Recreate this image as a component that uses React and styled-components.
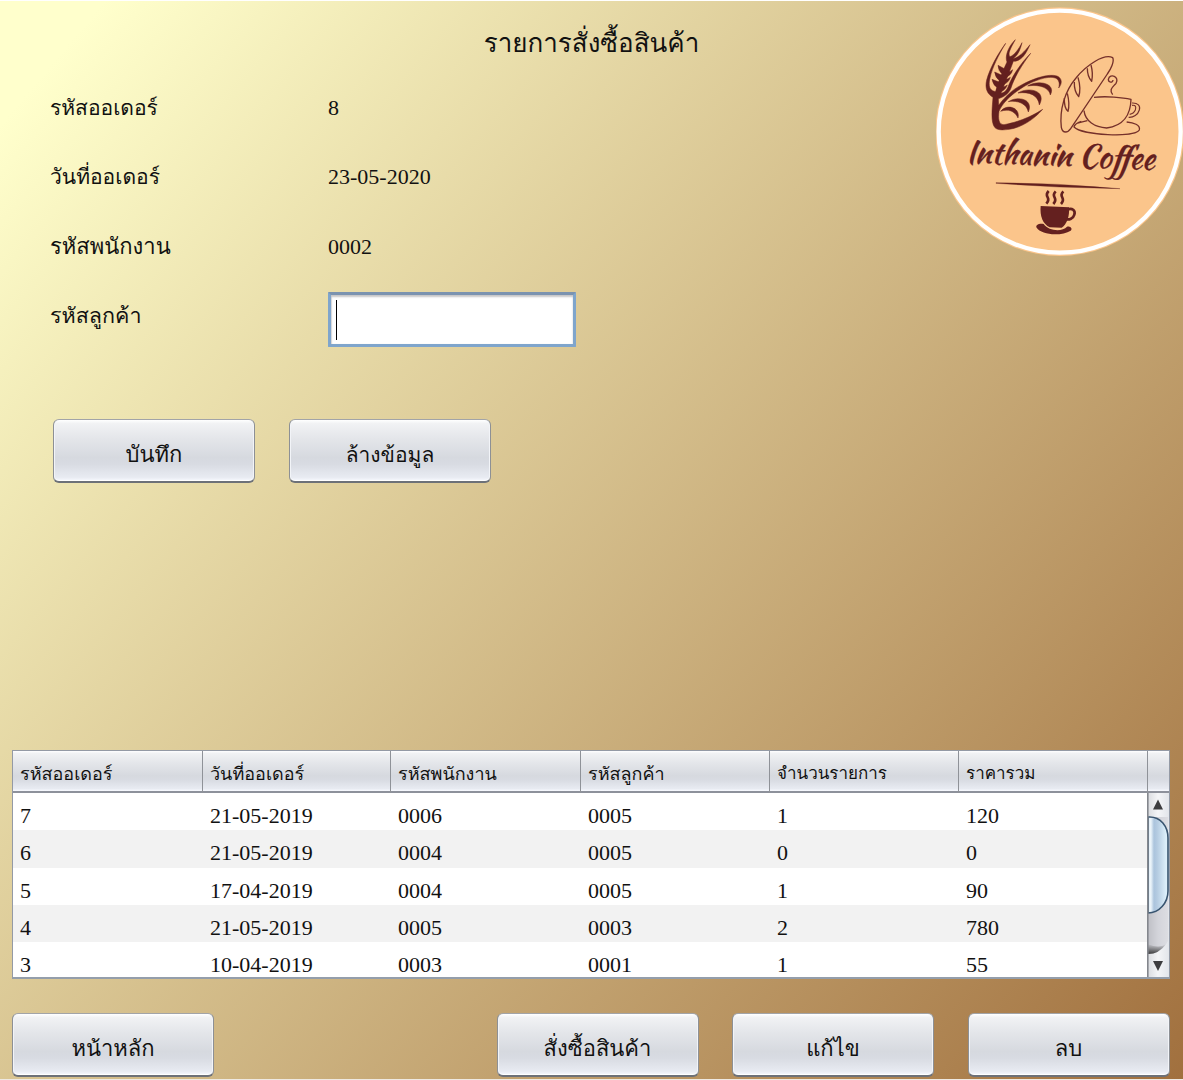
import React from 'react';
import styled, { createGlobalStyle } from 'styled-components';

const Global = createGlobalStyle`
  body { margin: 0; }
  * { box-sizing: border-box; }
`;

const steel = 'linear-gradient(180deg, #ffffff 0, #f1f2f4 6%, #e4e6ea 30%, #d6d9df 62%, #d8dbe2 72%, #e8ebf2 94%, #f8faff 100%)';

const Screen = styled.main`
  width: 1183px;
  height: 1080px;
  overflow: hidden;
  display: flex;
  flex-direction: column;
  border-top: 1px solid #fff;
  border-bottom: 1px solid #eee9e2;
  background: linear-gradient(130deg, #ffffcc 5%, #9f6d3b 102%);
  font-family: 'Liberation Serif', 'Loma', serif;
  font-size: 22px;
  color: #111;
`;

const Top = styled.header`
  display: grid;
  grid-template-columns: 936px 247px;
  height: 418px;
`;

const Title = styled.h1`
  margin: 0;
  padding: 23px 0 0 247px;
  height: 72px;
  font-weight: 400;
  font-size: 26px;
  line-height: 40px;
  text-align: center;
  white-space: nowrap;
`;

const Form = styled.dl`
  margin: 0;
  padding-left: 50px;
`;

const FormRow = styled.div`
  display: flex;
  height: 69.3px;
`;

const Label = styled.dt`
  width: 278px;
  font-size: ${(p) => p.$size || 21}px;
  line-height: 70px;
`;

const Value = styled.dd`
  margin: 0;
  line-height: 70px;
`;

const Field = styled.div`
  width: 248px;
  height: 55px;
  margin-top: 11px;
  padding: 5px 5px 5px;
  border: 3px solid #7fa5cc;
  border-top-color: #7b93b0;
  border-radius: 1px;
  background: #fff;
  box-shadow: inset 0 2px 2px #c6c6c8, inset 1px 0 1px #ddd;
`;

const Caret = styled.div`
  width: 1px;
  height: 40px;
  background: #000;
`;

const Logo = styled.svg`
  width: 247px;
  height: 250px;
  margin-top: 5px;
`;

const Button = styled.button`
  width: 202px;
  height: 64px;
  padding: 8px 0 0;
  border: 1px solid #8d9095;
  border-top-color: #a2a4a8;
  border-bottom: 2px solid #6d7178;
  border-radius: 6px;
  background: ${steel};
  box-shadow: inset 1px 0 #f2f4f8, inset -1px 0 #f2f4f8, inset 0 -1px #fff;
  font-family: inherit;
  font-size: ${(p) => p.$size || 22}px;
  color: #111;
`;

const FormActions = styled.div`
  display: flex;
  gap: 34px;
  padding-left: 53px;
  height: 331px;
`;

const Footer = styled.footer`
  display: flex;
  gap: 33.5px;
  padding: 34px 13.5px 0 12px;
  & > :first-child { margin-right: auto; }
`;

const TableBox = styled.section`
  width: 1158px;
  height: 229px;
  margin-left: 12px;
  flex: none;
  border: 1px solid #949aa5;
  border-bottom: 2px solid #949eab;
  background: #fff;
  overflow: hidden;
`;

const HeadRow = styled.div`
  display: grid;
  grid-template-columns: 190px 188px 190px 189px 189px 189px 1fr;
  height: 42px;
  border-bottom: 2px solid #8d919b;
  background: ${steel};
`;

const HeadCell = styled.div`
  padding-left: 7px;
  border-right: ${(p) => (p.$last ? 'none' : '1px solid #8f9298')};
  font-size: ${(p) => p.$size || 18}px;
  line-height: 46px;
  white-space: nowrap;
`;

const Body = styled.div`
  display: flex;
  height: 184px;
`;

const Rows = styled.div`
  flex: 1;
  overflow: hidden;
`;

const DataRow = styled.div`
  display: grid;
  grid-template-columns: 190px 188px 190px 189px 189px 189px;
  height: 37.3px;
  padding-top: 4px;
  background: ${(p) => (p.$striped ? '#f2f2f2' : '#fff')};
  line-height: 37px;
  & > span { padding-left: 7px; }
`;

const ScrollBar = styled.svg`
  width: 22px;
  height: 184px;
  flex: none;
`;

const columns = [
  { name: 'รหัสออเดอร์' },
  { name: 'วันที่ออเดอร์' },
  { name: 'รหัสพนักงาน' },
  { name: 'รหัสลูกค้า' },
  { name: 'จำนวนรายการ', size: 17 },
  { name: 'ราคารวม', size: 17 },
];
const orders = [
  ['7', '21-05-2019', '0006', '0005', '1', '120'],
  ['6', '21-05-2019', '0004', '0005', '0', '0'],
  ['5', '17-04-2019', '0004', '0005', '1', '90'],
  ['4', '21-05-2019', '0005', '0003', '2', '780'],
  ['3', '10-04-2019', '0003', '0001', '1', '55'],
];

const brown = '#64201f';

function CoffeeLogo() {
  return (
    <Logo viewBox="18 18 741 750">
      <circle cx="389" cy="395" r="373" fill="#fbc58b" />
      <circle cx="389" cy="395" r="363" fill="none" stroke="#fff" strokeWidth="13" />
      {/* wheat ear and striped loaf */}
      <g transform="translate(88 90)" fill={brown} stroke={brown} strokeWidth="1.5">
        <path d="M139 40C115 72 91 116 82 150C76 176 84 192 101 202C98 240 94 276 106 292C114 302 133 300 150 298C188 292 224 268 250 238C210 264 168 278 134 284C118 284 116 266 119 244C128 222 150 198 184 176C220 152 266 136 288 144C299 149 302 160 298 174C310 160 308 144 293 138C266 130 222 146 188 164C156 180 134 204 118 226L117 206C132 202 148 192 155 174C164 144 188 104 214 70C186 98 160 136 148 166C142 184 132 190 122 190L100 182C88 176 88 160 92 144C99 112 118 74 139 40Z" />
        <path d="M106 196C114 160 130 124 143 96C136 80 146 50 168 29C154 54 144 72 152 80C164 76 178 58 188 38C182 64 172 80 160 86C178 84 196 64 212 44C198 76 184 94 162 94C150 126 134 168 121 200Z" />
        <path d="M135 116L116 106Q117 124 129 132ZM128 136L106 126Q108 145 122 153ZM121 157L98 148Q101 167 116 174ZM143 126Q154 126 160 119Q156 138 134 143ZM134 148Q146 149 153 142Q148 160 126 166ZM127 171Q138 171 144 165Q137 183 119 187Z" />
        <path d="M124 244C142 220 184 232 176 264C166 242 146 236 124 244ZM147 215C176 196 224 208 207 246C202 222 178 210 147 215ZM176 189C205 170 264 180 240 225C237 196 210 184 176 189ZM205 168C236 148 292 160 273 195C270 174 242 162 205 168Z" />
      </g>
      {/* baguette beside a cup */}
      <g transform="translate(88 90)" fill="none" stroke="#75302a" strokeWidth="4" strokeLinejoin="round">
        <path d="M306 292C300 240 316 184 350 144C380 106 434 70 460 83C466 94 454 118 444 132L334 296C326 308 310 312 306 292Z" />
        <path d="M315 204Q314 234 326 244Q332 222 324 190M345 156Q344 184 358 200Q366 176 356 142M384 115Q384 140 397 154Q402 130 395 105" />
        <path d="M404 202C440 198 490 202 515 208C514 254 492 288 442 294C406 292 378 274 374 242" />
        <path d="M518 219C536 218 544 228 540 240C536 254 522 263 508 262M518 226Q533 224 528 240Q523 251 511 253" strokeWidth="3.4" />
        <path d="M366 274C354 278 345 286 344 291C370 316 524 324 540 300C544 284 522 278 502 276M352 280Q370 276 384 272" />
        <path d="M460 194C448 178 460 172 470 160C482 140 452 128 447 148C447 158 460 160 461 150" />
      </g>
      <g fill={brown} stroke={brown} strokeWidth="0.8" fontFamily="'Kaushan Script', Lato, cursive" fontSize="96" transform="rotate(2 122 488)">
        <text x="108" y="488" textLength="316" lengthAdjust="spacingAndGlyphs">Inthanin</text>
        <text x="446" y="489" textLength="228" lengthAdjust="spacingAndGlyphs">Coffee</text>
      </g>
      <path d="M198 548Q385 549 570 566Q385 564 198 550Z" fill={brown} stroke={brown} strokeWidth="1" />
      {/* small filled cup */}
      <g transform="translate(-3 0)">
        <g fill="none" stroke={brown} strokeWidth="8">
          <path d="M359 573Q350 582 356 592Q361 601 352 611M380 574Q371 583 377 593Q382 602 373 612M403 574Q394 583 400 593Q405 602 396 612" />
          <path d="M414 629C430 622 440 632 436 644C433 655 421 661 409 657" />
        </g>
        <path d="M335 618L420 622C422 648 414 674 398 683L362 682C342 672 332 650 335 618Z" fill={brown} />
        <path d="M322 682C320 672 334 669 344 672C360 694 400 696 414 680C424 678 432 686 425 692C400 708 338 708 322 682Z" fill={brown} />
      </g>
    </Logo>
  );
}

function VerticalScroll() {
  return (
    <ScrollBar viewBox="0 0 22 184">
      <defs>
        <linearGradient id="track"><stop offset="0" stopColor="#bfc0c6" /><stop offset=".5" stopColor="#d3d4da" /><stop offset="1" stopColor="#dcdde2" /></linearGradient>
        <linearGradient id="cap"><stop offset="0" stopColor="#d8dade" /><stop offset=".5" stopColor="#f4f5f7" /><stop offset="1" stopColor="#e2e5ea" /></linearGradient>
        <linearGradient id="thumb"><stop offset="0" stopColor="#dce9f3" /><stop offset=".14" stopColor="#edf5fa" /><stop offset=".3" stopColor="#abc4dd" /><stop offset=".45" stopColor="#b4cbe1" /><stop offset=".9" stopColor="#dceffa" /></linearGradient>
        <linearGradient id="shade" x2="0" y2="1"><stop offset="0" stopColor="#333" stopOpacity="0" /><stop offset="1" stopColor="#222" stopOpacity=".85" /></linearGradient>
      </defs>
      <rect width="22" height="184" fill="url(#cap)" />
      <path d="M1 24H21V148Q14 161 1 161Z" fill="url(#track)" />
      <path d="M1 151Q12 156 19 151Q12 161 1 161Z" fill="url(#shade)" />
      <path d="M1 24C14 23 21 34 21 45V98C21 110 12 120 1 120Z" fill="url(#thumb)" stroke="#395570" strokeWidth="1.6" />
      <rect width="1.6" height="184" fill="#84878d" />
      <path d="M6 16.5L11 6.5L16 16.5Z" fill="#3d3d3f" />
      <path d="M6 168L11 178L16 168Z" fill="#3d3d3f" />
    </ScrollBar>
  );
}

export default function App() {
  return (
    <>
      <Global />
      <Screen>
        <Top>
          <div>
            <Title>รายการสั่งซื้อสินค้า</Title>
            <Form>
              <FormRow><Label>รหัสออเดอร์</Label><Value>8</Value></FormRow>
              <FormRow><Label>วันที่ออเดอร์</Label><Value>23-05-2020</Value></FormRow>
              <FormRow><Label $size={22}>รหัสพนักงาน</Label><Value>0002</Value></FormRow>
              <FormRow><Label $size={21.5}>รหัสลูกค้า</Label><Value><Field><Caret /></Field></Value></FormRow>
            </Form>
          </div>
          <CoffeeLogo />
        </Top>
        <FormActions>
          <Button>บันทึก</Button>
          <Button $size={21}>ล้างข้อมูล</Button>
        </FormActions>
        <TableBox>
          <HeadRow>
            {columns.map(({ name, size }) => <HeadCell key={name} $size={size}>{name}</HeadCell>)}
            <HeadCell $last />
          </HeadRow>
          <Body>
            <Rows>
              {orders.map((order, i) => (
                <DataRow key={order[0]} $striped={i % 2 === 1}>
                  {order.map((value, c) => <span key={c}>{value}</span>)}
                </DataRow>
              ))}
            </Rows>
            <VerticalScroll />
          </Body>
        </TableBox>
        <Footer>
          <Button>หน้าหลัก</Button>
          <Button>สั่งซื้อสินค้า</Button>
          <Button>แก้ไข</Button>
          <Button>ลบ</Button>
        </Footer>
      </Screen>
    </>
  );
}
